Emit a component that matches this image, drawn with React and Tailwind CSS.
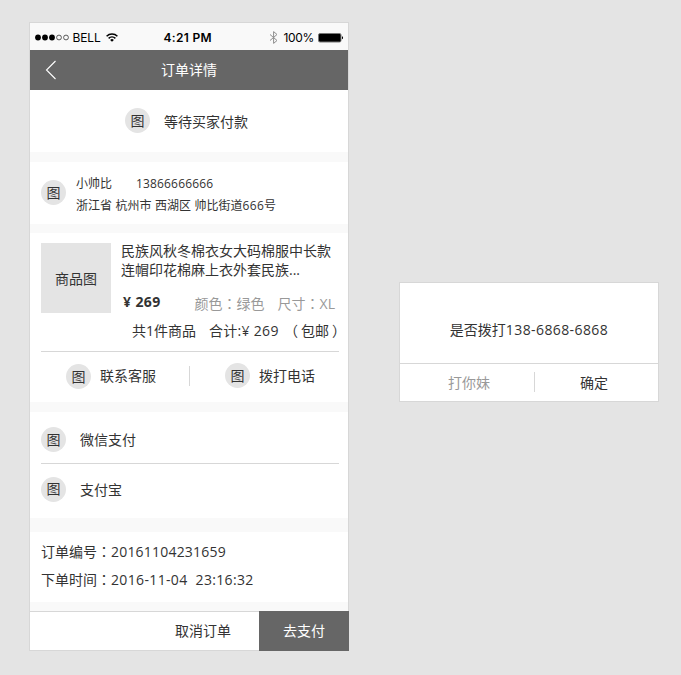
const Circle = ({ className = "" }) => (
  <span
    className={`flex h-[25px] w-[25px] shrink-0 items-center justify-center rounded-full bg-[#e4e4e4] leading-5 ${className}`}
  >
    图
  </span>
);

// Dos puntos centrados en su celda
const Colon = () => <span className="font-['Noto_Sans_CJK_TC',sans-serif] leading-none" lang="zh-TW">：</span>;

const Gap = ({ className = "h-[10px]" }) => <div className={`shrink-0 bg-[#f9f9f9] ${className}`} />;

const StatusBar = () => (
  <div className="flex h-[27px] items-center bg-[#f9f9f9] pt-[3px] font-['Inter','Liberation_Sans',sans-serif] text-xs text-black">
    <svg className="mb-px ml-[5px]" width="35" height="7" viewBox="0 0 35 7">
      {[3, 10, 17].map((cx) => (
        <circle key={cx} cx={cx} cy="3.5" r="2.9" fill="#000" />
      ))}
      {[24, 31].map((cx) => (
        <circle key={cx} cx={cx} cy="3.5" r="2.4" fill="none" stroke="#333" strokeWidth="0.8" />
      ))}
    </svg>
    <span className="ml-[2.5px] w-[33px] tracking-[-0.1px]">BELL</span>
    <svg className="mb-0.5" width="12" height="9" viewBox="0 0 12 9" fill="none" stroke="#000" strokeWidth="1.5">
      <path d="M0.6 3.2a7.7 7.7 0 0 1 10.8 0" />
      <path d="M2.6 5.4a4.9 4.9 0 0 1 6.8 0" />
      <path d="M6 8.8L4.1 6.9a2.7 2.7 0 0 1 3.8 0z" fill="#000" stroke="none" />
    </svg>
    <span className="ml-[46px] w-[52px] font-semibold tracking-[0.3px]">4:21 PM</span>
    <svg className="mb-px ml-[53px]" width="9" height="13" viewBox="0 0 9 13" fill="none" stroke="#8e8e8e">
      <path d="M1 3.5l7 6L4.6 12.4V0.6L8 3.5l-7 6" />
    </svg>
    <span className="ml-[6px] w-[31px] tracking-[-0.3px]">100%</span>
    <svg className="mb-px ml-[3px]" width="26" height="10" viewBox="0 0 26 10">
      <rect x="0.5" y="0.5" width="22.5" height="8.5" rx="1.5" fill="#000" stroke="#777" />
      <path d="M24 3.2c1.4 0.4 1.4 2.7 0 3.1z" fill="#000" />
    </svg>
  </div>
);

const payments = ["微信支付", "支付宝"];

const OrderDetail = () => (
  <div className="mt-[22px] ml-[29px] flex h-[629px] w-[320px] shrink-0 flex-col border border-[#d7d7d7] bg-white">
    <StatusBar />
    <header className="flex h-10 items-center bg-[#666] text-white">
      <svg className="ml-[15px]" width="12" height="20" viewBox="0 0 12 20" fill="none" stroke="#fff" strokeWidth="1.1">
        <path d="M10.5 1L1.5 10l9 9" />
      </svg>
      <h1 className="mr-[27px] flex-1 text-center">订单详情</h1>
    </header>

    <section className="flex h-[62px] items-center pl-[95px]">
      <Circle className="mb-px" />
      <span className="mt-0.5 ml-[14px]">等待买家付款</span>
    </section>
    <Gap />

    {/* Dirección de entrega */}
    <section className="flex h-[62px] items-center pl-[11px]">
      <Circle className="mb-px" />
      <div className="mt-1 ml-[10px] text-xs leading-[22px]">
        <p>
          小帅比<span className="ml-6 tracking-[0.16px]">13866666666</span>
        </p>
        <p className="[word-spacing:0.4px]">
          浙江省 杭州市 西湖区 帅比街道<span className="tracking-[0.3px]">666</span>号
        </p>
      </div>
    </section>
    <Gap className="h-[9px]" />

    {/* Producto */}
    <section className="h-[169px] pt-[10px] pr-[9px] pl-[11px]">
      <div className="flex h-[70px]">
        <div className="flex w-[70px] items-center justify-center bg-[#e4e4e4] pt-0.5">商品图</div>
        <div className="ml-[10px] flex-1">
          <p className="-mt-0.5 leading-[19px]">
            民族风秋冬棉衣女大码棉服中长款
            <br />
            连帽印花棉麻上衣外套民族...
          </p>
          <div className="mt-[13px] flex justify-between pr-1">
            <b className="ml-0.5 tracking-[0.4px]">¥ 269</b>
            <span className="mt-0.5 flex text-[#999]">
              <span>颜色<Colon />绿色</span>
              <span className="ml-[13px]">尺寸<Colon />XL</span>
            </span>
          </div>
        </div>
      </div>
      <div className="mt-2 ml-[91px] flex whitespace-nowrap">
        <span className="w-[77px] shrink-0">共1件商品</span>
        <span className="w-[75px] shrink-0 tracking-[0.3px]">合计:¥ 269</span>
        <span>（</span>
        <span className="ml-[3px]">包邮</span>
        <span className="ml-[3px] w-2">）</span>
      </div>
      <div className="mt-[10px] flex h-[50px] items-center border-t border-[#d7d7d7]">
        <div className="flex w-[148px] items-center pl-[25px]">
          <Circle />
          <span className="mb-px ml-[9px]">联系客服</span>
        </div>
        <i className="mb-0.5 h-5 w-px bg-[#d7d7d7]" />
        <div className="flex flex-1 items-center pl-[35px]">
          <Circle className="mb-0.5" />
          <span className="mb-0.5 ml-[9px]">拨打电话</span>
        </div>
      </div>
    </section>
    <Gap />

    <section className="h-[106px] pr-[9px] pl-[11px]">
      {payments.map((name, i) => (
        <div key={name} className={i === 0 ? "flex h-[51px] items-center pt-1" : "flex h-[51px] items-center border-t border-[#d7d7d7]"}>
          <Circle />
          <span className={i === 0 ? "ml-[14px]" : "mt-0.5 ml-[14px]"}>{name}</span>
        </div>
      ))}
    </section>
    <Gap className="h-[14px]" />

    <section className="h-[70px] pt-[6px] pl-[11px] leading-7">
      <p>订单编号<Colon /><span className="tracking-[0.2px]">20161104231659</span></p>
      <p>下单时间<Colon /><span className="whitespace-pre tracking-[0.35px]">2016-11-04  23:16:32</span></p>
    </section>
    <Gap className="h-[9px]" />

    <footer className="flex h-[39px] border-t border-[#d7d7d7]">
      <button className="flex-1 pl-[116px]">取消订单</button>
      <button className="-m-px w-[90px] bg-[#666] text-white">去支付</button>
    </footer>
  </div>
);

const CallDialog = () => (
  <div className="mt-[282px] ml-[50px] h-[120px] w-[260px] shrink-0 border border-[#d7d7d7] bg-white">
    <p className="h-20 pt-[37px] text-center">
      是否拨打<span className="tracking-[0.4px]">138-6868-6868</span>
    </p>
    <div className="flex h-[38px] items-center border-t border-[#d7d7d7]">
      <button className="w-[134px] pl-1 text-[#999]">打你妹</button>
      <i className="mb-0.5 h-5 w-px bg-[#d7d7d7]" />
      <button className="flex-1 pr-[5px]">确定</button>
    </div>
  </div>
);

export default function App() {
  return (
    <div className="flex h-[675px] w-[681px] items-start overflow-hidden bg-[#e4e4e4] font-['Open_Sans','Noto_Sans_CJK_SC',sans-serif] text-sm leading-5 text-[#333]">
      <OrderDetail />
      <CallDialog />
    </div>
  );
}
